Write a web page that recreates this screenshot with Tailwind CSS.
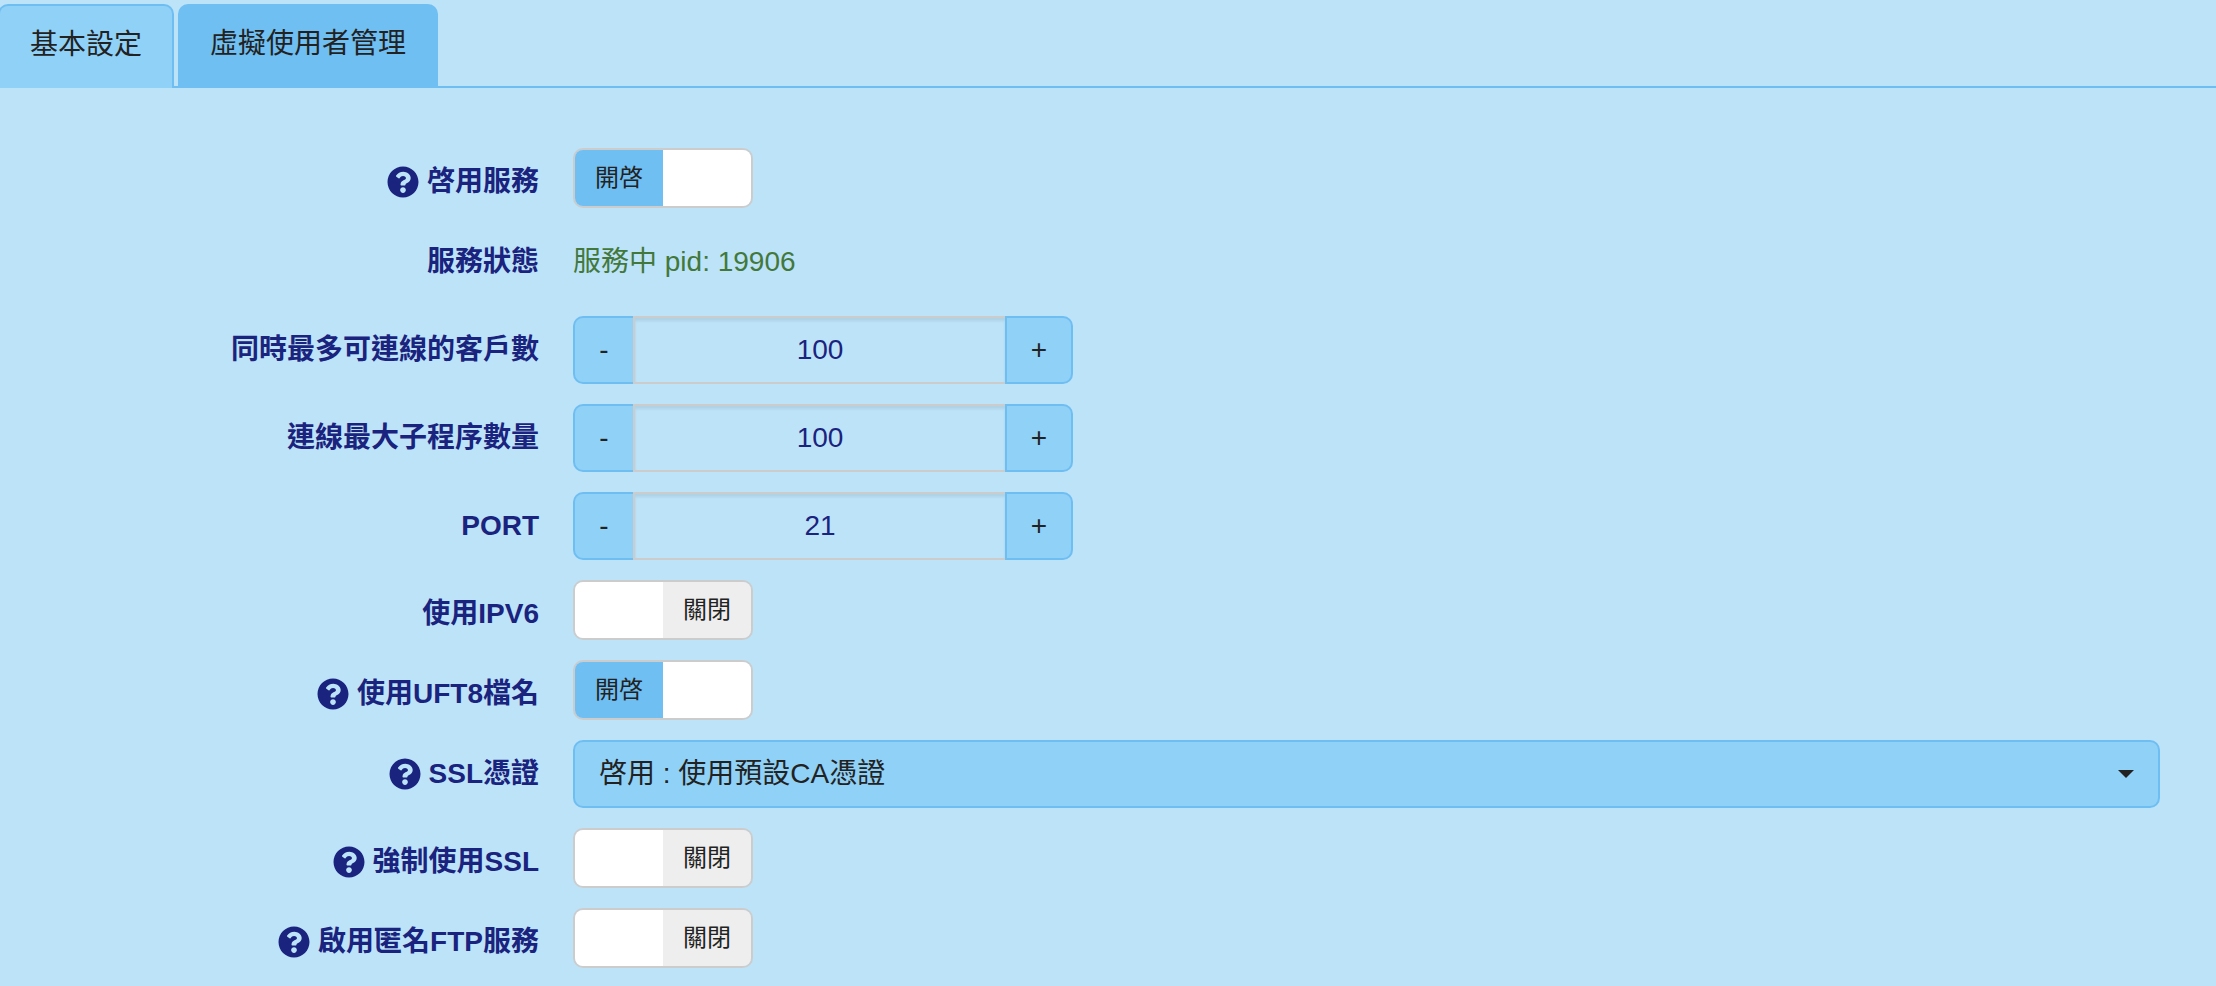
<!DOCTYPE html>
<html lang="zh-Hant">

<head>
    <meta charset="UTF-8" />
    <title>FTP 設定</title>
    <script src="https://cdn.jsdelivr.net/npm/@tailwindcss/browser@4"></script>
</head>

<body class="min-h-screen overflow-hidden bg-[#bde3f9] font-['Liberation_Sans','Noto_Sans_CJK_TC',sans-serif] text-[28px] text-[#222222]">
    <!-- tabs -->
    <div class="flex items-end h-[88px] border-b-2 border-[#6fbef2]">
        <a class="flex items-center justify-center w-[176px] h-[84px] -ml-[2px] -mb-[2px] pb-1 bg-[#90d1f7] border-2 border-b-0 border-[#6fbef2] rounded-t-[10px]">基本設定</a>
        <a class="flex items-center justify-center w-[260px] h-[84px] ml-[4px] -mb-[2px] pb-1 bg-[#6fbff2] rounded-t-[10px]">虛擬使用者管理</a>
    </div>

    <form class="flex flex-col gap-5 pt-[60px] pr-[56px]">
        <div class="flex items-center h-[60px]">
            <label class="flex items-center justify-end gap-2 w-[539px] mr-[34px] pt-2 font-bold text-[#1a237e]">
                <svg class="w-8 h-8" viewBox="0 0 512 512" fill="currentColor"><path d="M504 256c0 136.997-111.043 248-248 248S8 392.997 8 256C8 119.083 119.043 8 256 8s248 111.083 248 248zM262.655 90c-54.497 0-89.255 22.957-116.549 63.758-3.536 5.286-2.353 12.415 2.715 16.258l34.699 26.31c5.205 3.947 12.621 3.008 16.665-2.122 17.864-22.658 30.113-35.797 57.303-35.797 20.429 0 45.698 13.148 45.698 32.958 0 14.976-12.363 22.667-32.534 33.976C247.128 238.528 216 254.941 216 296v4c0 6.627 5.373 12 12 12h56c6.627 0 12-5.373 12-12v-1.333c0-28.462 83.186-29.647 83.186-106.667 0-58.002-60.165-102-116.531-102zM256 338c-25.365 0-46 20.635-46 46 0 25.364 20.635 46 46 46s46-20.636 46-46c0-25.365-20.635-46-46-46z" /></svg>
                啓用服務
            </label>
            <div class="flex w-[180px] h-[60px] border-2 border-[#cccccc] rounded-[10px] overflow-hidden text-2xl">
                <span class="flex items-center justify-center w-[88px] bg-[#6fbff2]">開啓</span>
                <span class="flex-1 bg-white"></span>
            </div>
        </div>

        <div class="flex items-center h-[68px]">
            <label class="flex items-center justify-end gap-2 w-[539px] mr-[34px] font-bold text-[#1a237e]">服務狀態</label>
            <span class="text-[#43783c]">服務中 pid: 19906</span>
        </div>

        <div class="flex items-center h-[68px]">
            <label class="flex items-center justify-end gap-2 w-[539px] mr-[34px] font-bold text-[#1a237e]">同時最多可連線的客戶數</label>
            <div class="flex w-[500px] h-[68px]">
                <button type="button" class="w-[60px] bg-[#90d1f7] border-2 border-r-0 border-[#6fbef2] rounded-l-[10px]">-</button>
                <div class="flex flex-1 items-center justify-center border-y-2 border-l-2 border-[#cccccc] shadow-[inset_0_3px_3px_rgba(0,0,0,0.08)] text-[#1a237e]">100</div>
                <button type="button" class="w-[68px] bg-[#90d1f7] border-2 border-[#6fbef2] rounded-r-[10px]">+</button>
            </div>
        </div>

        <div class="flex items-center h-[68px]">
            <label class="flex items-center justify-end gap-2 w-[539px] mr-[34px] font-bold text-[#1a237e]">連線最大子程序數量</label>
            <div class="flex w-[500px] h-[68px]">
                <button type="button" class="w-[60px] bg-[#90d1f7] border-2 border-r-0 border-[#6fbef2] rounded-l-[10px]">-</button>
                <div class="flex flex-1 items-center justify-center border-y-2 border-l-2 border-[#cccccc] shadow-[inset_0_3px_3px_rgba(0,0,0,0.08)] text-[#1a237e]">100</div>
                <button type="button" class="w-[68px] bg-[#90d1f7] border-2 border-[#6fbef2] rounded-r-[10px]">+</button>
            </div>
        </div>

        <div class="flex items-center h-[68px]">
            <label class="flex items-center justify-end gap-2 w-[539px] mr-[34px] font-bold text-[#1a237e]">PORT</label>
            <div class="flex w-[500px] h-[68px]">
                <button type="button" class="w-[60px] bg-[#90d1f7] border-2 border-r-0 border-[#6fbef2] rounded-l-[10px]">-</button>
                <div class="flex flex-1 items-center justify-center border-y-2 border-l-2 border-[#cccccc] shadow-[inset_0_3px_3px_rgba(0,0,0,0.08)] text-[#1a237e]">21</div>
                <button type="button" class="w-[68px] bg-[#90d1f7] border-2 border-[#6fbef2] rounded-r-[10px]">+</button>
            </div>
        </div>

        <div class="flex items-center h-[60px]">
            <label class="flex items-center justify-end gap-2 w-[539px] mr-[34px] pt-2 font-bold text-[#1a237e]">使用IPV6</label>
            <div class="flex w-[180px] h-[60px] border-2 border-[#cccccc] rounded-[10px] overflow-hidden text-2xl">
                <span class="w-[88px] bg-white"></span>
                <span class="flex flex-1 items-center justify-center bg-[#eeeeee]">關閉</span>
            </div>
        </div>

        <div class="flex items-center h-[60px]">
            <label class="flex items-center justify-end gap-2 w-[539px] mr-[34px] pt-2 font-bold text-[#1a237e]">
                <svg class="w-8 h-8" viewBox="0 0 512 512" fill="currentColor"><path d="M504 256c0 136.997-111.043 248-248 248S8 392.997 8 256C8 119.083 119.043 8 256 8s248 111.083 248 248zM262.655 90c-54.497 0-89.255 22.957-116.549 63.758-3.536 5.286-2.353 12.415 2.715 16.258l34.699 26.31c5.205 3.947 12.621 3.008 16.665-2.122 17.864-22.658 30.113-35.797 57.303-35.797 20.429 0 45.698 13.148 45.698 32.958 0 14.976-12.363 22.667-32.534 33.976C247.128 238.528 216 254.941 216 296v4c0 6.627 5.373 12 12 12h56c6.627 0 12-5.373 12-12v-1.333c0-28.462 83.186-29.647 83.186-106.667 0-58.002-60.165-102-116.531-102zM256 338c-25.365 0-46 20.635-46 46 0 25.364 20.635 46 46 46s46-20.636 46-46c0-25.365-20.635-46-46-46z" /></svg>
                使用UFT8檔名
            </label>
            <div class="flex w-[180px] h-[60px] border-2 border-[#cccccc] rounded-[10px] overflow-hidden text-2xl">
                <span class="flex items-center justify-center w-[88px] bg-[#6fbff2]">開啓</span>
                <span class="flex-1 bg-white"></span>
            </div>
        </div>

        <div class="flex items-center h-[68px]">
            <label class="flex items-center justify-end gap-2 w-[539px] mr-[34px] font-bold text-[#1a237e]">
                <svg class="w-8 h-8" viewBox="0 0 512 512" fill="currentColor"><path d="M504 256c0 136.997-111.043 248-248 248S8 392.997 8 256C8 119.083 119.043 8 256 8s248 111.083 248 248zM262.655 90c-54.497 0-89.255 22.957-116.549 63.758-3.536 5.286-2.353 12.415 2.715 16.258l34.699 26.31c5.205 3.947 12.621 3.008 16.665-2.122 17.864-22.658 30.113-35.797 57.303-35.797 20.429 0 45.698 13.148 45.698 32.958 0 14.976-12.363 22.667-32.534 33.976C247.128 238.528 216 254.941 216 296v4c0 6.627 5.373 12 12 12h56c6.627 0 12-5.373 12-12v-1.333c0-28.462 83.186-29.647 83.186-106.667 0-58.002-60.165-102-116.531-102zM256 338c-25.365 0-46 20.635-46 46 0 25.364 20.635 46 46 46s46-20.636 46-46c0-25.365-20.635-46-46-46z" /></svg>
                SSL憑證
            </label>
            <div class="flex flex-1 items-center justify-between h-[68px] pl-6 pr-[24px] bg-[#90d1f7] border-2 border-[#6fbef2] rounded-[10px]">
                <span>啓用 : 使用預設CA憑證</span>
                <span class="w-0 h-0 border-x-8 border-t-8 border-x-transparent border-t-[#222222]"></span>
            </div>
        </div>

        <div class="flex items-center h-[60px]">
            <label class="flex items-center justify-end gap-2 w-[539px] mr-[34px] pt-2 font-bold text-[#1a237e]">
                <svg class="w-8 h-8" viewBox="0 0 512 512" fill="currentColor"><path d="M504 256c0 136.997-111.043 248-248 248S8 392.997 8 256C8 119.083 119.043 8 256 8s248 111.083 248 248zM262.655 90c-54.497 0-89.255 22.957-116.549 63.758-3.536 5.286-2.353 12.415 2.715 16.258l34.699 26.31c5.205 3.947 12.621 3.008 16.665-2.122 17.864-22.658 30.113-35.797 57.303-35.797 20.429 0 45.698 13.148 45.698 32.958 0 14.976-12.363 22.667-32.534 33.976C247.128 238.528 216 254.941 216 296v4c0 6.627 5.373 12 12 12h56c6.627 0 12-5.373 12-12v-1.333c0-28.462 83.186-29.647 83.186-106.667 0-58.002-60.165-102-116.531-102zM256 338c-25.365 0-46 20.635-46 46 0 25.364 20.635 46 46 46s46-20.636 46-46c0-25.365-20.635-46-46-46z" /></svg>
                強制使用SSL
            </label>
            <div class="flex w-[180px] h-[60px] border-2 border-[#cccccc] rounded-[10px] overflow-hidden text-2xl">
                <span class="w-[88px] bg-white"></span>
                <span class="flex flex-1 items-center justify-center bg-[#eeeeee]">關閉</span>
            </div>
        </div>

        <div class="flex items-center h-[60px]">
            <label class="flex items-center justify-end gap-2 w-[539px] mr-[34px] pt-2 font-bold text-[#1a237e]">
                <svg class="w-8 h-8" viewBox="0 0 512 512" fill="currentColor"><path d="M504 256c0 136.997-111.043 248-248 248S8 392.997 8 256C8 119.083 119.043 8 256 8s248 111.083 248 248zM262.655 90c-54.497 0-89.255 22.957-116.549 63.758-3.536 5.286-2.353 12.415 2.715 16.258l34.699 26.31c5.205 3.947 12.621 3.008 16.665-2.122 17.864-22.658 30.113-35.797 57.303-35.797 20.429 0 45.698 13.148 45.698 32.958 0 14.976-12.363 22.667-32.534 33.976C247.128 238.528 216 254.941 216 296v4c0 6.627 5.373 12 12 12h56c6.627 0 12-5.373 12-12v-1.333c0-28.462 83.186-29.647 83.186-106.667 0-58.002-60.165-102-116.531-102zM256 338c-25.365 0-46 20.635-46 46 0 25.364 20.635 46 46 46s46-20.636 46-46c0-25.365-20.635-46-46-46z" /></svg>
                啟用匿名FTP服務
            </label>
            <div class="flex w-[180px] h-[60px] border-2 border-[#cccccc] rounded-[10px] overflow-hidden text-2xl">
                <span class="w-[88px] bg-white"></span>
                <span class="flex flex-1 items-center justify-center bg-[#eeeeee]">關閉</span>
            </div>
        </div>
    </form>
</body>

</html>
